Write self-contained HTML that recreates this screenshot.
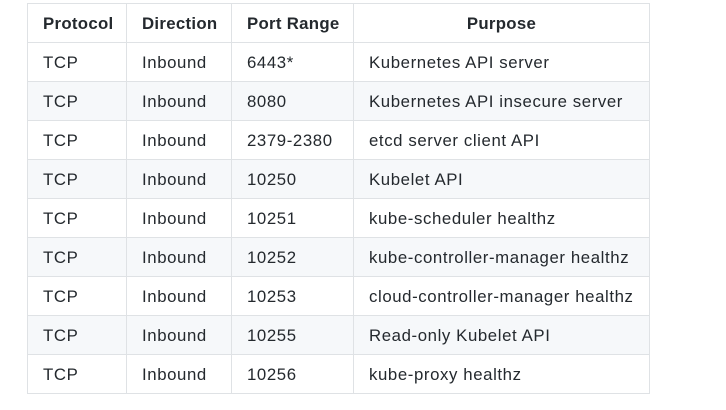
<!DOCTYPE html>
<html><head><style>
html,body{margin:0;padding:0;background:#fff;width:726px;height:410px;overflow:hidden}
table{position:absolute;left:27px;top:3px;border-collapse:collapse;font-family:"Liberation Sans",Arial,sans-serif;font-size:16.8px;letter-spacing:0.6px;color:#24292e}
td,th{border:1px solid #dfe2e5;height:39px;padding:1px 0 0 15px;text-align:left;box-sizing:border-box}
th{font-weight:bold;letter-spacing:0.3px}
th.c{text-align:center;padding:1px 0 0 0}
tr:nth-child(2n+1) td{background:#f6f8fa}
tr:first-child th{background:#fff}
</style></head><body>
<table>
<colgroup><col style="width:99px"><col style="width:105px"><col style="width:122px"><col style="width:296px"></colgroup>
<tr><th>Protocol</th><th>Direction</th><th>Port Range</th><th class="c">Purpose</th></tr>
<tr><td>TCP</td><td>Inbound</td><td>6443*</td><td>Kubernetes API server</td></tr>
<tr><td>TCP</td><td>Inbound</td><td>8080</td><td>Kubernetes API insecure server</td></tr>
<tr><td>TCP</td><td>Inbound</td><td>2379-2380</td><td>etcd server client API</td></tr>
<tr><td>TCP</td><td>Inbound</td><td>10250</td><td>Kubelet API</td></tr>
<tr><td>TCP</td><td>Inbound</td><td>10251</td><td>kube-scheduler healthz</td></tr>
<tr><td>TCP</td><td>Inbound</td><td>10252</td><td>kube-controller-manager healthz</td></tr>
<tr><td>TCP</td><td>Inbound</td><td>10253</td><td>cloud-controller-manager healthz</td></tr>
<tr><td>TCP</td><td>Inbound</td><td>10255</td><td>Read-only Kubelet API</td></tr>
<tr><td>TCP</td><td>Inbound</td><td>10256</td><td>kube-proxy healthz</td></tr>
</table>
</body></html>
